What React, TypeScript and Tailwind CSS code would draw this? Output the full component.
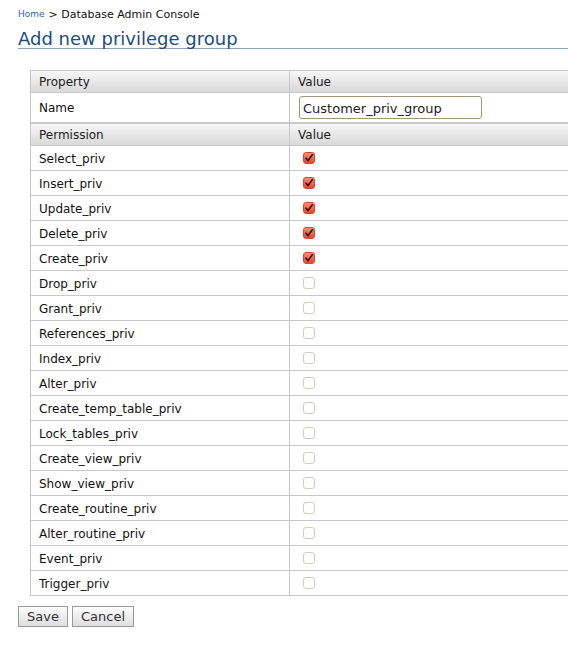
import React from "react";

const perms: [string, boolean][] = [
  ["Select_priv", true],
  ["Insert_priv", true],
  ["Update_priv", true],
  ["Delete_priv", true],
  ["Create_priv", true],
  ["Drop_priv", false],
  ["Grant_priv", false],
  ["References_priv", false],
  ["Index_priv", false],
  ["Alter_priv", false],
  ["Create_temp_table_priv", false],
  ["Lock_tables_priv", false],
  ["Create_view_priv", false],
  ["Show_view_priv", false],
  ["Create_routine_priv", false],
  ["Alter_routine_priv", false],
  ["Event_priv", false],
  ["Trigger_priv", false],
];

function Check({ on }: { on: boolean }) {
  if (on)
    return (
      <span className="inline-flex w-[12px] h-[12px] rounded-[3px] border border-[#d8452f] bg-linear-to-b from-[#f98a72] to-[#e8432b] items-center justify-center">
        <svg width="10" height="10" viewBox="0 0 10 10">
          <path d="M2 5.2 L4.1 7.6 L8.3 1.8" fill="none" stroke="#2a1a18" strokeWidth="1.7" strokeLinecap="round" strokeLinejoin="round" />
        </svg>
      </span>
    );
  return <span className="inline-block w-[12px] h-[12px] rounded-[3px] border border-[#d6ccba] bg-white" />;
}

const hdr = "grid grid-cols-[258px_1fr] bg-linear-to-b from-[#f7f7f7] to-[#d9d9d9] border-b border-[#c8c8c8] text-[#222]";

export default function App() {
  return (
    <div className="w-[568px] h-[667px] overflow-hidden bg-white pl-[18px] text-[#111]" style={{ fontFamily: '"DejaVu Sans", Verdana, sans-serif' }}>
      <div className="h-[28px] flex items-center gap-[4px] pt-[2px]">
        <span className="text-[9px] text-[#2a64ad]">Home</span>
        <span className="text-[11px] text-[#111]">&gt; Database Admin Console</span>
      </div>
      <div className="h-[21px] leading-[22px] text-[18px] text-[#1b4d7e] border-b border-[#8fa2ba]">
        Add new privilege group
      </div>
      <div className="mt-[21px] ml-[12px] w-[580px] text-[12px]">
        <div className="border-l border-t border-[#c8c8c8]">
          <div className={hdr + " h-[22px]"}>
            <div className="pl-[8px] pt-[1px] flex items-center">Property</div>
            <div className="pl-[8px] pt-[1px] flex items-center border-l border-[#c8c8c8]">Value</div>
          </div>
          <div className="grid grid-cols-[258px_1fr] h-[30px] border-b border-[#c8c8c8]">
            <div className="pl-[8px] pt-[1px] flex items-center">Name</div>
            <div className="pl-[9px] flex items-center border-l border-[#c8c8c8]">
              <input
                defaultValue="Customer_priv_group"
                className="w-[183px] h-[23px] border border-[#a39676] rounded-[3px] px-[3px] pt-[1px] text-[13px] text-[#222] outline-none"
                style={{ fontFamily: '"DejaVu Sans", Verdana, sans-serif' }}
              />
            </div>
          </div>
        </div>
        <div className="border-l border-t border-[#c8c8c8]">
          <div className={hdr + " h-[22px]"}>
            <div className="pl-[8px] pt-[1px] flex items-center">Permission</div>
            <div className="pl-[8px] pt-[1px] flex items-center border-l border-[#c8c8c8]">Value</div>
          </div>
          {perms.map(([name, on]) => (
            <div key={name} className="grid grid-cols-[258px_1fr] h-[25px] border-b border-[#c8c8c8]">
              <div className="pl-[8px] pt-[2px] flex items-center">{name}</div>
              <div className="pl-[13px] flex items-center border-l border-[#c8c8c8]">
                <Check on={on} />
              </div>
            </div>
          ))}
        </div>
      </div>
      <div className="mt-[10px] flex gap-[4px]">
        <button className="w-[50px] h-[21px] border border-[#9a9a9a] bg-linear-to-b from-[#fdfdfd] to-[#dedede] text-[13px] text-[#333] leading-none">Save</button>
        <button className="w-[62px] h-[21px] border border-[#9a9a9a] bg-linear-to-b from-[#fdfdfd] to-[#dedede] text-[13px] text-[#333] leading-none">Cancel</button>
      </div>
    </div>
  );
}
